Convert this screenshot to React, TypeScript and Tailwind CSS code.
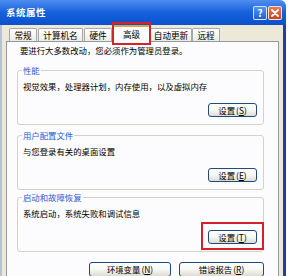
import React from 'react';

const font = "font-['Noto_Sans_CJK_SC','Noto_Sans',sans-serif]";

function XPButton({ label, hotkey, w, h }: { label: string; hotkey: string; w: string; h: string }) {
  return (
    <button
      className={`${w} ${h} rounded-[3px] border border-[#1d4b7e] bg-gradient-to-b from-white via-[#f7f7f3] to-[#dedcd2] text-[8.4px] leading-none text-black flex items-center justify-center`}
    >
      {label}
      <span className="ml-[1px]">(</span>
      <span className="underline">{hotkey}</span>
      <span>)</span>
    </button>
  );
}

function Group({
  title,
  text,
  hotkey,
  className,
  highlight,
}: {
  title: string;
  text: string;
  hotkey: string;
  className: string;
  highlight?: boolean;
}) {
  return (
    <fieldset className={`${className} ml-[10px] w-[247px] rounded-[3px] border border-[#d3d2c6] pl-[5px] pr-[6px] pb-[7px]`}>
      <legend className="-ml-[1px] px-[1px] text-[8.4px] leading-[10px] text-[#2d5ccf]">{title}</legend>
      <div className="pt-[6px] text-[8.4px] leading-[10px]">{text}</div>
      <div className="mt-[12px] flex justify-end">
        <div className="relative">
          <XPButton label="设置" hotkey={hotkey} w="w-[49px]" h="h-[14px]" />
          {highlight && (
            <span className="pointer-events-none absolute -left-[7px] -right-[7px] -top-[8px] -bottom-[6px] border-2 border-[#d2232a]" />
          )}
        </div>
      </div>
    </fieldset>
  );
}

const tabs = [
  { label: '常规', w: 'w-[28px]', ml: 'ml-0' },
  { label: '计算机名', w: 'w-[45px]', ml: 'ml-[1px]' },
  { label: '硬件', w: 'w-[28px]', ml: 'ml-[1px]' },
];
const tabsAfter = [
  { label: '自动更新', w: 'w-[42px]', ml: 'ml-0' },
  { label: '远程', w: 'w-[28px]', ml: 'ml-0' },
];

function Tab({ label, w, ml }: { label: string; w: string; ml: string }) {
  return (
    <div
      className={`${w} ${ml} h-[13px] rounded-t-[2px] border border-b-0 border-[#a3a9ab] bg-gradient-to-b from-white to-[#ecebe4] text-[8.6px] leading-[12px] text-center`}
    >
      {label}
    </div>
  );
}

export default function App() {
  return (
    <div className={`w-[290px] h-[276px] overflow-hidden bg-white text-black ${font}`}>
      <div className="w-[286px] h-full flex flex-col">
        {/* title bar */}
        <div className="h-[25px] shrink-0 rounded-tr-[6px] bg-gradient-to-b from-[#4d8ef0] via-[#1560dc] to-[#0c51cc] flex items-center pl-[6px] pr-[4px]">
          <span className="text-[9.5px] font-bold text-white tracking-[0.5px]">系统属性</span>
          <div className="ml-auto flex gap-[1px]">
            <div className="w-[14px] h-[14px] rounded-[2px] border border-white/80 bg-gradient-to-b from-[#4f95f6] to-[#1d5fd6] flex items-center justify-center text-[10px] font-bold leading-none text-white">
              ?
            </div>
            <div className="w-[14px] h-[14px] rounded-[2px] border border-white/80 bg-gradient-to-b from-[#ec7a55] to-[#c9401c] flex items-center justify-center">
              <svg width="8" height="8" viewBox="0 0 8 8">
                <path d="M1 1 L7 7 M7 1 L1 7" stroke="white" strokeWidth="1.8" strokeLinecap="round" />
              </svg>
            </div>
          </div>
        </div>

        {/* window body */}
        <div className="flex-1 flex flex-col bg-[#ece9d8] border-l-2 border-l-[#b9c1d6] border-r-[3px] border-r-[#1f3fb0] pl-[4px] pr-[4px]">
          {/* tabs */}
          <div className="relative z-10 h-[16px] flex items-end pl-[3px]">
            {tabs.map((t) => (
              <Tab key={t.label} {...t} />
            ))}
            <div className="relative ml-[1px] -mb-px">
              <div className="w-[37px] h-[17px] rounded-t-[2px] border border-b-0 border-[#a3a9ab] border-t-2 border-t-[#e9a23b] bg-[#fcfcfe] text-[8.6px] leading-[14px] text-center">
                高级
              </div>
              <span className="pointer-events-none absolute -left-[1px] -right-[1px] -top-[3px] -bottom-[3px] border-2 border-[#d2232a]" />
            </div>
            {tabsAfter.map((t) => (
              <Tab key={t.label} {...t} />
            ))}
          </div>

          {/* tab panel */}
          <div className="flex-1 border border-[#919b9c] bg-[#fcfcfe]">
            <div className="pl-[13px] pt-[3px] text-[8.4px] leading-[10px]">要进行大多数改动，您必须作为管理员登录。</div>

            <Group className="mt-[10px]" title="性能" text="视觉效果，处理器计划，内存使用，以及虚拟内存" hotkey="S" />
            <Group className="mt-[5px]" title="用户配置文件" text="与您登录有关的桌面设置" hotkey="E" />
            <Group className="mt-[2px]" title="启动和故障恢复" text="系统启动，系统失败和调试信息" hotkey="T" highlight />

            <div className="mt-[10px] ml-[10px] w-[247px] flex justify-end gap-[8px]">
              <XPButton label="环境变量" hotkey="N" w="w-[82px]" h="h-[15px]" />
              <XPButton label="错误报告" hotkey="R" w="w-[85px]" h="h-[15px]" />
            </div>
          </div>
        </div>
      </div>
    </div>
  );
}
